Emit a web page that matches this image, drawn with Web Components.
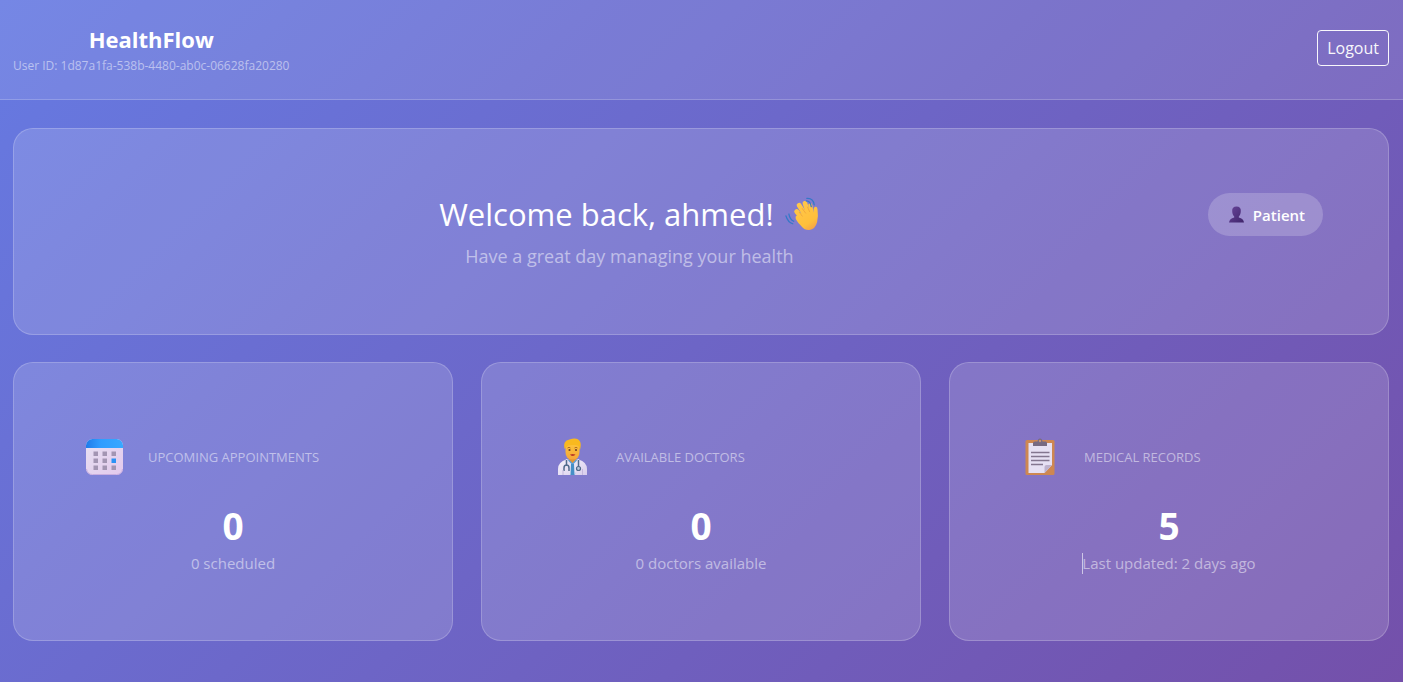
<!DOCTYPE html>
<html lang="en">
<head>
<meta charset="utf-8">
<title>HealthFlow</title>
<style>
  html { height: 100%; }
  body {
    margin: 0;
    min-height: 100%;
    color: #fff;
    font-family: "Segoe UI", "Open Sans", "Noto Sans", sans-serif;
    font-size: 16px;
    line-height: 24px;
    background: linear-gradient(135deg, #667ae2 0%, #7450aa 100%);
  }
</style>
</head>
<body>
<health-app></health-app>

<template id="tpl-app">
  <style>
    :host { display: block; }
    main { display: grid; gap: 27px; padding: 28px 14px 40px 13px; }
    .stats { display: grid; grid-template-columns: repeat(auto-fit, minmax(300px, 1fr)); gap: 28px; }
  </style>
  <app-header user-id="1d87a1fa-538b-4480-ab0c-06628fa20280">HealthFlow</app-header>
  <main>
    <welcome-card role-name="Patient">
      Welcome back, ahmed!
      <span slot="message">Have a great day managing your health</span>
    </welcome-card>
    <section class="stats">
      <stat-card value="0" note="0 scheduled">
        <emoji-icon slot="icon" name="calendar"></emoji-icon>Upcoming Appointments
      </stat-card>
      <stat-card value="0" note="0 doctors available">
        <emoji-icon slot="icon" name="doctor"></emoji-icon>Available Doctors
      </stat-card>
      <stat-card value="5" note="Last updated: 2 days ago" caret>
        <emoji-icon slot="icon" name="clipboard"></emoji-icon>Medical Records
      </stat-card>
    </section>
  </main>
</template>

<template id="tpl-header">
  <style>
    :host {
      display: flex; align-items: flex-start; justify-content: space-between;
      box-sizing: border-box; min-height: 100px;
      padding: 22px 14px 20px 13px;
      background: rgba(255,255,255,.1);
      border-bottom: 1px solid rgba(255,255,255,.2);
    }
    .brand { text-align: center; }
    h1 { margin: 0; font-size: 22px; line-height: 34px; font-weight: 700; }
    p { margin: 0; font-size: 12px; line-height: 20px; color: rgba(255,255,255,.5); }
    button {
      box-sizing: border-box; height: 36px; margin: 8px 0 0; padding: 0 9px;
      font: inherit; color: #fff; opacity: .95;
      background: none; border: 1px solid #fff; border-radius: 4px;
    }
  </style>
  <div class="brand">
    <h1><slot></slot></h1>
    <p></p>
  </div>
  <button type="button">Logout</button>
</template>

<template id="tpl-welcome">
  <style>
    :host {
      display: flex; align-items: flex-start; gap: 28px;
      padding: 64px 65px;
      background: rgba(255,255,255,.15);
      border: 1px solid rgba(255,255,255,.2);
      border-radius: 20px;
    }
    .text { flex: 1; text-align: center; }
    h2 {
      display: flex; align-items: center; justify-content: center; gap: 11px;
      margin: 0; font-size: 31px; line-height: 42px; font-weight: 400;
    }
    h2 emoji-icon { width: 35px; height: 35px; }
    p { margin: 0; padding-top: 8px; font-size: 18px; line-height: 27px; color: rgba(255,255,255,.5); }
    .badge {
      display: flex; align-items: center; gap: 7px; box-sizing: border-box;
      height: 43px; padding: 0 18px 0 19px;
      font-size: 15px; font-weight: 600;
      background: rgba(255,255,255,.2); border-radius: 22px;
    }
    .badge emoji-icon { width: 19px; height: 19px; }
  </style>
  <div class="text">
    <h2><span><slot></slot></span><emoji-icon name="wave"></emoji-icon></h2>
    <p><slot name="message"></slot></p>
  </div>
  <div class="badge"><emoji-icon name="person"></emoji-icon><span class="role"></span></div>
</template>

<template id="tpl-stat">
  <style>
    :host {
      display: block; padding: 64px;
      background: rgba(255,255,255,.15);
      border: 1px solid rgba(255,255,255,.2);
      border-radius: 20px;
      text-align: center;
    }
    .head { display: flex; align-items: center; gap: 17px; height: 60px; }
    ::slotted(emoji-icon) { width: 53px; height: 40px; }
    h3 {
      margin: 0; font-size: 13px; line-height: 20px; font-weight: 400;
      text-transform: uppercase; color: rgba(255,255,255,.5);
    }
    .value { padding-top: 14px; font-size: 37px; line-height: 50px; font-weight: 700; }
    .note { font-size: 15px; line-height: 25px; color: rgba(255,255,255,.5); }
    .note span { position: relative; }
    :host([caret]) .note span::before {
      content: ""; position: absolute; left: 0; top: 0; width: 1px; height: 21px;
      background: rgba(255,255,255,.6);
    }
  </style>
  <div class="head"><slot name="icon"></slot><h3><slot></slot></h3></div>
  <div class="value"></div>
  <div class="note"><span></span></div>
</template>

<template id="tpl-icon">
  <style>
    :host { display: inline-flex; flex: none; align-items: center; justify-content: center; }
    svg { display: block; width: 100%; height: 100%; }
  </style>
</template>

<template id="svg-calendar">
  <svg viewBox="0 0 40 40" aria-hidden="true">
    <defs>
      <linearGradient id="b" x1="0" x2="1"><stop offset="0" stop-color="#1f7bea"/><stop offset=".4" stop-color="#2f9dff"/><stop offset="1" stop-color="#38a8ff"/></linearGradient>
      <linearGradient id="p" x1="0" y1="0" x2="1" y2="1"><stop offset="0" stop-color="#e6e0f2"/><stop offset="1" stop-color="#e3c9ec"/></linearGradient>
    </defs>
    <rect x="1.5" y="2" width="37" height="36" rx="6.5" fill="url(#p)"/>
    <path d="M1.500 11V8.500A6.500 6.500 0 0 1 8 2H32A6.500 6.500 0 0 1 38.500 8.500V11Z" fill="url(#b)"/>
    <path d="M2 32Q3 37.500 8 37.500H32Q37.500 37.500 38 32" fill="none" stroke="#c9aee0" stroke-width="1"/>
    <g fill="#a395b3">
      <path d="M9 14.500h4.500V19H9zM18 14.500h4.500V19H18zM27 14.500h4.500V19H27zM9 21.500h4.500V26H9zM18 21.500h4.500V26H18zM9 28.500h4.500V33H9zM18 28.500h4.500V33H18zM27 28.500h4.500V33H27z"/>
    </g>
    <path d="M27 21.500h4.500V26H27z" fill="#2c92f5"/>
  </svg>
</template>

<template id="svg-doctor">
  <svg viewBox="0 0 40 40" aria-hidden="true">
    <defs>
      <linearGradient id="f" x1="0" y1="0" x2="0" y2="1"><stop offset="0" stop-color="#ffc83a"/><stop offset="1" stop-color="#f5a63b"/></linearGradient>
      <linearGradient id="c" x1="0" y1="0" x2="1" y2="1"><stop offset="0" stop-color="#f5f2fb"/><stop offset="1" stop-color="#d8cdec"/></linearGradient>
    </defs>
    <path d="M5.500 38V32Q5.500 25 14 22.500H26Q34.500 25 34.500 32V38Z" fill="url(#c)"/>
    <path d="M15.500 22.500H24.500L22.500 38H18Z" fill="#5c9fd6"/>
    <path d="M16 20H24V22L20 26 16 22Z" fill="#e49335"/>
    <path d="M14 22L20 28 26 22 28 24 22 38H18L12 24Z" fill="#e8e3f4"/>
    <path d="M18.500 27H21.500L22 38H18Z" fill="#458fc7"/>
    <path d="M13 11Q13 5 20 5T27 11V15Q27 22.500 20 22.500T13 15Z" fill="url(#f)"/>
    <path d="M12 12Q10 3.500 17 2.500Q25 0 27.500 4.500Q29 7 27.500 13L26 9Q24 7.500 20 8Q15 8 14 10Z" fill="#f9b91f"/>
    <path d="M15 11Q16.500 9.500 18 11M22 11Q23.500 9.500 25 11" fill="none" stroke="#a86720" stroke-width=".9"/>
    <circle cx="17" cy="13" r="1.100" fill="#704024"/><circle cx="23.500" cy="13" r="1.100" fill="#704024"/>
    <path d="M17.500 17.500Q20 16.500 23 17.500Q20 20.500 17.500 17.500Z" fill="#bb3b28"/>
    <path d="M14 23V29M26 23V30M11.500 34V31Q11.500 28 14 28T16.500 31V34" fill="none" stroke="#516b8c" stroke-width="1.500"/>
    <circle cx="26" cy="31.500" r="2" fill="#b9c5db" stroke="#516b8c" stroke-width="1.200"/>
    <path d="M10.500 33V38M30 32V38" stroke="#c3b7dc" stroke-width="1"/>
  </svg>
</template>

<template id="svg-clipboard">
  <svg viewBox="0 0 40 40" aria-hidden="true">
    <rect x="5" y="3" width="29" height="35" rx="1.500" fill="#ce8751"/>
    <path d="M8 6H31.500V28L24 36H8Z" fill="#e6e0f3"/>
    <path d="M31.500 28L24 36V30Q24 28 26 28Z" fill="#bdb1cd"/>
    <path d="M12.500 9V6Q12.500 4.500 14.500 4.500H17Q17.500 1.500 19.500 1.500T22 4.500H25Q26.500 4.500 26.500 6V9Z" fill="#776a82"/>
    <circle cx="19.500" cy="4" r="1.200" fill="#c79473"/>
    <path d="M10.500 15.500H29M10.500 19.500H29M10.500 23.500H29M10.500 27.500H22.500" stroke="#83768f" stroke-width="1.300"/>
  </svg>
</template>

<template id="svg-wave">
  <svg viewBox="0 0 36 36" aria-hidden="true">
    <defs><linearGradient id="h" gradientUnits="userSpaceOnUse" x1="12" y1="6" x2="32" y2="34"><stop offset="0" stop-color="#ffc84a"/><stop offset=".7" stop-color="#ffbf3b"/><stop offset="1" stop-color="#f39a4d"/></linearGradient></defs>
    <g fill="none" stroke="url(#h)" stroke-linecap="round">
      <path d="M12 15L20 25" stroke-width="5"/>
      <path d="M14.500 8.500L23 22" stroke-width="5"/>
      <path d="M20.500 6.500L25 20" stroke-width="4.800"/>
      <path d="M26 8.500L28 20" stroke-width="4.200"/>
    </g>
    <path d="M11 20Q12.500 18 15 20L18 15 25 14 28 18Q29.500 16 29.500 12Q30 9.500 32 10Q33.500 10.500 33.500 13Q34.500 20 33 26Q31 33.500 25 34Q20 34.500 16 29Q10 23 11 20Z" fill="url(#h)"/>
    <path d="M18 20L14.500 15.500M21.500 17L17.500 11.500M25.500 15.500L23 10" fill="none" stroke="#eda13a" stroke-width=".8"/>
    <path d="M22 4Q26 4 27 10M22.500 1.500Q29 1 30 8M4 17.500Q5 23 9 25M1 19.500Q3 26 8 27.500" fill="none" stroke="#3478c8" stroke-width="1.300" stroke-linecap="round"/>
  </svg>
</template>

<template id="svg-person">
  <svg viewBox="0 0 19 19" aria-hidden="true">
    <defs><linearGradient id="s" x1="0" y1="0" x2="1" y2="1"><stop offset="0" stop-color="#68449a"/><stop offset="1" stop-color="#3f256a"/></linearGradient></defs>
    <path d="M9.500 1.500C12.500 1.500 14 3 13.800 6C13.800 8.500 13 10.500 11.800 11.500V12.500Q16.500 13.500 17 17.500H2Q2.500 13.500 7.200 12.500V11.500C6 10.500 5.200 8.500 5.200 6C5 3 6.500 1.500 9.500 1.500Z" fill="url(#s)"/>
  </svg>
</template>

<script>
  const tpl = id => document.getElementById(id).content.cloneNode(true);

  class Base extends HTMLElement {
    constructor(id) {
      super();
      this.attachShadow({ mode: "open" }).append(tpl(id));
    }
    $(selector) { return this.shadowRoot.querySelector(selector); }
  }

  customElements.define("emoji-icon", class extends Base {
    constructor() { super("tpl-icon"); }
    connectedCallback() {
      if (!this.$("svg")) this.shadowRoot.append(tpl("svg-" + this.getAttribute("name")));
    }
  });

  customElements.define("app-header", class extends Base {
    constructor() { super("tpl-header"); }
    connectedCallback() { this.$("p").textContent = "User ID: " + this.getAttribute("user-id"); }
  });

  customElements.define("welcome-card", class extends Base {
    constructor() { super("tpl-welcome"); }
    connectedCallback() { this.$(".role").textContent = this.getAttribute("role-name"); }
  });

  customElements.define("stat-card", class extends Base {
    constructor() { super("tpl-stat"); }
    connectedCallback() {
      this.$(".value").textContent = this.getAttribute("value");
      this.$(".note span").textContent = this.getAttribute("note");
    }
  });

  customElements.define("health-app", class extends Base {
    constructor() { super("tpl-app"); }
  });
</script>
</body>
</html>
